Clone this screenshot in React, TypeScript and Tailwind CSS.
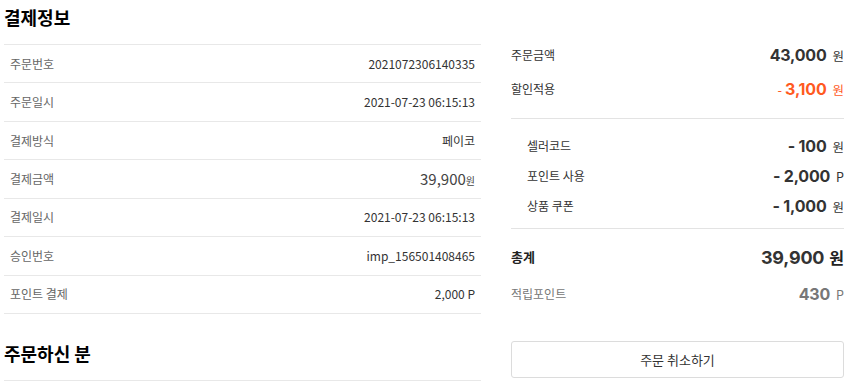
import React from 'react';

const KR = { fontFamily: '"Noto Sans CJK KR", "Noto Sans", sans-serif' };

interface InfoRow {
  label: string;
  value: React.ReactNode;
}

const PAY_ROWS: InfoRow[] = [
  { label: '주문번호', value: '2021072306140335' },
  { label: '주문일시', value: '2021-07-23 06:15:13' },
  { label: '결제방식', value: '페이코' },
  {
    label: '결제금액',
    value: (
      <span className="text-[15px] text-[#444]">
        39,900<span className="text-[10px]">원</span>
      </span>
    ),
  },
  { label: '결제일시', value: '2021-07-23 06:15:13' },
  { label: '승인번호', value: 'imp_156501408465' },
  { label: '포인트 결제', value: '2,000 P' },
];

const DISCOUNTS = [
  { label: '셀러코드', amount: '- 100', unit: '원' },
  { label: '포인트 사용', amount: '- 2,000', unit: 'P' },
  { label: '상품 쿠폰', amount: '- 1,000', unit: '원' },
];

function Amount({ value, unit, className }: { value: string; unit: string; className: string }) {
  return (
    <span className={`flex items-baseline gap-[6px] ${className}`}>
      <span className="font-bold tracking-[-0.2px]" style={{ fontFamily: 'Inter, sans-serif' }}>
        {value}
      </span>
      <span className="text-[12.5px] font-normal">{unit}</span>
    </span>
  );
}

export default function App() {
  return (
    <div className="w-[855px] h-[388px] overflow-hidden bg-white flex pl-[4px]" style={KR}>
      {/* 결제정보 */}
      <div className="w-[477px] shrink-0">
        <h2 className="h-[44px] pt-[4px] text-[18px] font-bold text-black leading-[26px]">결제정보</h2>
        <div className="border-t border-[#e8e8e8]">
          {PAY_ROWS.map((r) => (
            <div
              key={r.label}
              className="h-[38.43px] border-b border-[#e8e8e8] flex items-center justify-between px-[6px]"
            >
              <span className="text-[12px] text-[#666]">{r.label}</span>
              <span className="text-[12px] text-[#333]">{r.value}</span>
            </div>
          ))}
        </div>
        <h2 className="mt-[26px] h-[41px] border-b border-[#e8e8e8] text-[18px] font-bold text-black leading-[26px]">
          주문하신 분
        </h2>
      </div>

      {/* 금액 요약 */}
      <div className="w-[333px] shrink-0 ml-[30px] pt-[38px]">
        <div className="h-[34px] flex items-center justify-between">
          <span className="text-[12px] text-[#333]">주문금액</span>
          <Amount value="43,000" unit="원" className="text-[16px] text-[#333]" />
        </div>
        <div className="h-[34px] flex items-center justify-between">
          <span className="text-[12px] text-[#333]">할인적용</span>
          <span className="flex items-baseline text-[#ff5a1f]">
            <span className="text-[13px] mr-[3px]">-</span>
            <span className="text-[16px] font-bold tracking-[-0.2px]" style={{ fontFamily: 'Inter, sans-serif' }}>
              3,100
            </span>
            <span className="text-[12.5px] ml-[6px]">원</span>
          </span>
        </div>
        <div className="mt-[12px] border-t border-[#e3e3e3]" />
        <div className="pt-[12px]">
          {DISCOUNTS.map((d) => (
            <div key={d.label} className="h-[30px] flex items-center justify-between pl-[16px]">
              <span className="text-[12px] text-[#333]">{d.label}</span>
              <Amount value={d.amount} unit={d.unit} className="text-[16px] text-[#333]" />
            </div>
          ))}
        </div>
        <div className="mt-[7px] border-t border-[#e3e3e3]" />
        <div className="mt-[14px] h-[28px] flex items-center justify-between">
          <span className="text-[13px] font-bold text-[#222]">총계</span>
          <span className="flex items-baseline gap-[5px] text-[#333]">
            <span className="text-[18px] font-bold tracking-[-0.2px]" style={{ fontFamily: 'Inter, sans-serif' }}>
              39,900
            </span>
            <span className="text-[16px] font-bold text-[#222]">원</span>
          </span>
        </div>
        <div className="mt-[9px] h-[28px] flex items-center justify-between">
          <span className="text-[12px] text-[#777]">적립포인트</span>
          <Amount value="430" unit="P" className="text-[16px] text-[#777]" />
        </div>
        <button
          type="button"
          className="mt-[33px] w-full h-[37px] rounded-[3px] border border-[#dcdcdc] bg-white text-[13px] text-[#333]"
        >
          주문 취소하기
        </button>
      </div>
    </div>
  );
}
